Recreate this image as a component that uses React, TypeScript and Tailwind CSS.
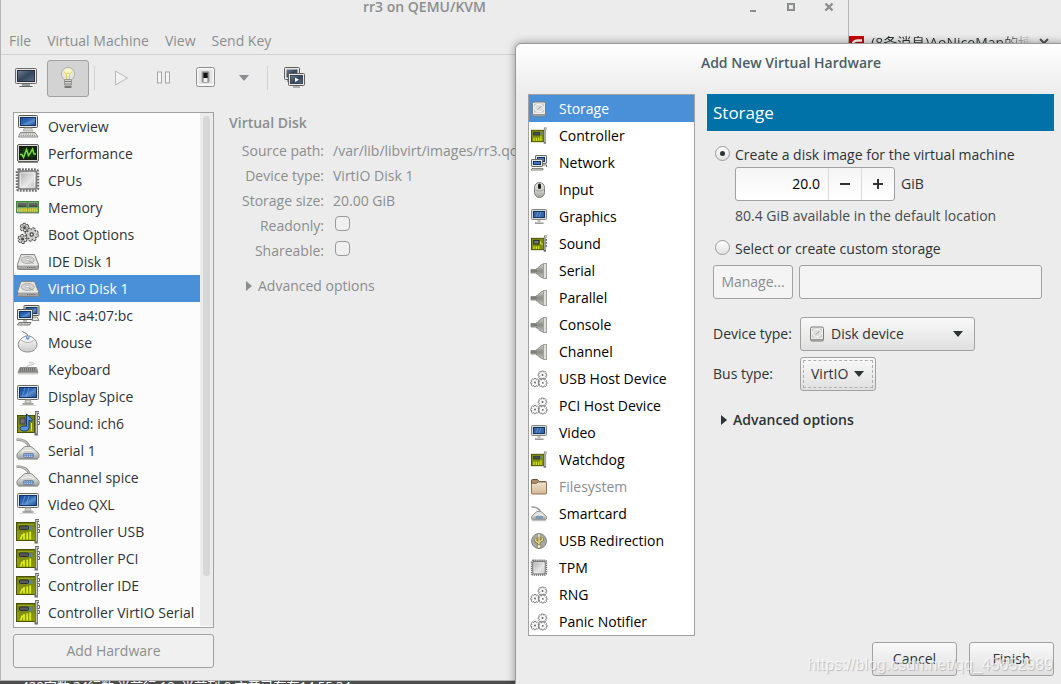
import { useState } from "react";
import type { ReactNode } from "react";
import clsx from "clsx";

// ─── Icon helpers ─────────────────────────────────────────────
const Svg = ({
  size,
  box = size,
  className,
  children,
}: {
  size: number;
  box?: number;
  className?: string;
  children: ReactNode;
}) => (
  <svg
    width={size}
    height={size}
    viewBox={`0 0 ${box} ${box}`}
    className={clsx("shrink-0 overflow-visible", className)}
    fill="none"
    aria-hidden="true"
  >
    {children}
  </svg>
);

// Gradients shared by all icons
const IconDefs = () => (
  <svg width="0" height="0" className="absolute" aria-hidden="true">
    <defs>
      <linearGradient id="blue" x1="0" y1="0" x2="1" y2="1">
        <stop offset="0" stopColor="#1b4c93" />
        <stop offset="0.45" stopColor="#2f69b6" />
        <stop offset="0.6" stopColor="#5d8fce" />
        <stop offset="1" stopColor="#1c4a8c" />
      </linearGradient>
      <linearGradient id="slate" x1="0" y1="0" x2="1" y2="1">
        <stop offset="0" stopColor="#6f8096" />
        <stop offset="0.5" stopColor="#36465c" />
        <stop offset="1" stopColor="#5a6b82" />
      </linearGradient>
      <linearGradient id="metal" x1="0" y1="0" x2="1" y2="1">
        <stop offset="0" stopColor="#a5a5a5" />
        <stop offset="0.6" stopColor="#e8e8e8" />
        <stop offset="1" stopColor="#b5b5b5" />
      </linearGradient>
      <linearGradient id="light" x1="0" y1="0" x2="0" y2="1">
        <stop offset="0" stopColor="#ffffff" />
        <stop offset="1" stopColor="#c9c9c9" />
      </linearGradient>
      <linearGradient id="body" x1="0" y1="0" x2="0" y2="1">
        <stop offset="0" stopColor="#e6e7e4" />
        <stop offset="0.6" stopColor="#cbccc8" />
        <stop offset="1" stopColor="#9fa19c" />
      </linearGradient>
      <linearGradient id="board" x1="0" y1="0" x2="0" y2="1">
        <stop offset="0" stopColor="#6f7d10" />
        <stop offset="1" stopColor="#8f9c12" />
      </linearGradient>
      <linearGradient id="plug" x1="0" y1="0" x2="0" y2="1">
        <stop offset="0" stopColor="#d0d2cb" />
        <stop offset="0.5" stopColor="#8b8d87" />
        <stop offset="1" stopColor="#c2c4bd" />
      </linearGradient>
      <linearGradient id="tan" x1="0" y1="0" x2="0" y2="1">
        <stop offset="0" stopColor="#f0e3d0" />
        <stop offset="1" stopColor="#d3b995" />
      </linearGradient>
    </defs>
  </svg>
);

// ─── 24px device icons ────────────────────────────────────────
const ComputerIcon = () => (
  <Svg size={24}>
    <rect x="2.5" y="0.5" width="19" height="12" rx="1" fill="#e4e4e0" stroke="#55574f" />
    <rect x="4.5" y="2.5" width="15" height="8" fill="url(#blue)" stroke="#12356b" />
    <path d="M8.500 13h7l1.500 3h-10z" fill="#d3d3cf" stroke="#a4a5a0" strokeWidth="0.800" />
    <path d="M4.500 17.500h14.500l3 4.500h-19.500z" fill="#eeeeec" stroke="#888a85" />
    <path d="M5 19h14M4.500 20.700h16" stroke="#8b8d88" strokeDasharray="1.500 0.700" />
  </Svg>
);

const PerformanceIcon = () => (
  <Svg size={24}>
    <rect x="1.500" y="2.500" width="21" height="17" rx="1.500" fill="#d9d9d5" stroke="#5b5d58" />
    <rect x="3.500" y="4.500" width="17" height="13" fill="#0e200c" stroke="#1a1a1a" />
    <path d="M4 8h16M4 11h16M4 14h16M8 5v12M12 5v12M16 5v12" stroke="#235a1c" strokeWidth="0.600" />
    <path d="M4 12.500h2l1.500 3 3-8 2 6 1.500-2 2.500-4.500 1.500 5h2" stroke="#7be03c" strokeWidth="1.500" />
    <path d="M2 20.500h20" stroke="#8b8d88" />
  </Svg>
);

const Chip = () => (
  <>
    <rect x="1" y="0.500" width="21" height="21" rx="2" stroke="#6f6f6f" strokeWidth="2.500" strokeDasharray="1.800 1.200" />
    <rect x="2.500" y="2" width="18" height="18" rx="2" fill="url(#metal)" stroke="#7b7b7b" strokeWidth="1.500" />
    <rect x="4.500" y="4" width="14" height="14" rx="1" stroke="#f2f2f2" strokeOpacity="0.700" />
  </>
);

const CpuIcon = () => (
  <Svg size={24}>
    <Chip />
  </Svg>
);

const MemoryIcon = () => (
  <Svg size={24}>
    <rect x="0.500" y="5.500" width="22" height="11" fill="#6ba564" stroke="#4d8449" />
    <rect x="2" y="7" width="8.500" height="4" fill="#4d504c" />
    <rect x="13" y="7" width="8.500" height="4" fill="#4d504c" />
    <path d="M2 8h8.500M13 8h8.500" stroke="#8a8a8a" strokeWidth="0.800" />
    <path d="M11.700 5v11" stroke="#3a8038" />
    <path d="M1 14h21" stroke="#d9d24a" strokeWidth="3.500" strokeDasharray="1.600 0.500" />
    <path d="M1 17.300h22" stroke="#b9b9b9" />
  </Svg>
);

const Gear = ({ x, y, r, dash }: { x: number; y: number; r: number; dash: string }) => (
  <g>
    <circle cx={x} cy={y} r={r} stroke="#4c4c4c" strokeWidth="3.6" strokeDasharray={dash} />
    <circle cx={x} cy={y} r={r} fill="#cfcfcd" stroke="#4c4c4c" strokeWidth="1.4" />
    <circle cx={x} cy={y} r={r} stroke="#e2e2df" strokeWidth="1.6" strokeDasharray={dash} />
    <circle cx={x} cy={y} r={r * 0.3} fill="#fff" stroke="#3c3c3c" strokeWidth="1.2" />
  </g>
);

const BootIcon = () => (
  <Svg size={24}>
    <Gear x={8.500} y={4.500} r={3} dash="2.100 1.040" />
    <Gear x={15.700} y={11.500} r={5.400} dash="2.400 1.840" />
    <Gear x={6.500} y={16} r={3.200} dash="2.100 1.250" />
  </Svg>
);

const DiskIcon = () => (
  <Svg size={24}>
    <path d="M5 4.500h13.500l4 10v4q0 1-1 1h-19q-1 0-1-1v-4z" fill="#dcdcda" stroke="#82827f" />
    <path d="M5.500 5.500h12.500l3.300 9h-19z" fill="#e6e6e4" />
    <ellipse cx="11.700" cy="10" rx="6.500" ry="3.500" fill="#d3d3d1" stroke="#adadab" />
    <ellipse cx="11.500" cy="9.500" rx="2" ry="1" fill="#f8f8f8" stroke="#a5a5a5" strokeWidth="0.600" />
    <path d="M13 11l4.500 2.500" stroke="#9b9b9b" />
    <path d="M2 15h20v4h-20z" fill="#a3a3a1" />
    <path d="M11 17.500h9" stroke="#6b6b69" strokeDasharray="1 0.800" />
    <path d="M2.500 15h19" stroke="#f4f4f4" />
  </Svg>
);

const NicIcon = () => (
  <Svg size={24}>
    <rect x="8" y="1.500" width="15" height="10" rx="0.500" fill="#e4e4e0" stroke="#55574f" />
    <rect x="10" y="3.500" width="11" height="6" fill="url(#blue)" stroke="#12356b" />
    <path d="M17 13h4l2 3.500h-7z" fill="#e4e4e0" stroke="#888a85" />
    <rect x="1.500" y="5.500" width="15" height="10" rx="0.500" fill="#e4e4e0" stroke="#55574f" />
    <rect x="3.500" y="7.500" width="11" height="6" fill="url(#blue)" stroke="#12356b" />
    <path d="M7 16h4v2H7z" fill="#babdb6" />
    <path d="M3 18.500h12l-1.500 2.500h-12z" fill="#eeeeec" stroke="#777973" />
    <path d="M3.500 19.800h10" stroke="#888a85" strokeDasharray="1 0.500" />
  </Svg>
);

const MouseIcon = () => (
  <Svg size={24}>
    <path d="M6.500 0c0 2 5.500 1.500 5 5" stroke="#777" />
    <path d="M11.700 5c5 0 9.300 4.500 9.300 8.500 0 4.500-4 7.500-9.300 7.500s-9.500-3-9.500-7.500c0-4 4.500-8.500 9.500-8.500z" fill="url(#light)" stroke="#8c8c8c" />
    <path d="M5 9c4.500 3.500 9 3.500 13.500 0" stroke="#b9b9b9" />
    <path d="M9.500 3.500l2 3.500 2.500-3-1 4.500h-2.500z" fill="#5f93d8" />
  </Svg>
);

const KeyboardIcon = () => (
  <Svg size={24}>
    <path d="M11 9c0-3 7-1 7-3.500 0-1.200-3-0.500-5-1" stroke="#bcbcbc" />
    <path d="M4 9.500h16.500l1.500 5.500h-20z" fill="#b4b4b2" stroke="#8c8c8a" />
    <path d="M4 11h16M3.500 13h17" stroke="#555" strokeWidth="1.300" strokeDasharray="1.300 0.700" />
    <path d="M2 16h20" stroke="#d1d1d1" />
  </Svg>
);

const DisplayIcon = () => (
  <Svg size={24}>
    <rect x="1.500" y="0.500" width="21" height="14" rx="1" fill="#e4e4e0" stroke="#6c6e68" />
    <rect x="3.500" y="2.500" width="17" height="10" fill="url(#blue)" stroke="#12356b" />
    <path d="M6 12l3-9M10 12l3-9" stroke="#7fa8de" strokeOpacity="0.600" />
    <path d="M9.500 15h5l0.500 3h-6z" fill="#d3d3cf" stroke="#a4a5a0" />
    <path d="M6.500 19h11" stroke="#8e908a" strokeWidth="1.500" />
    <path d="M4 20.500h16" stroke="#dedede" />
  </Svg>
);

const Bracket = () => (
  <>
    <path d="M23 0.500h-2.500v21.500h-2" stroke="#6b6d68" strokeWidth="2.800" />
    <path d="M22.800 0.500h-2.300v21" stroke="#c3c5bf" strokeWidth="1.200" />
    <path d="M21.500 4.500h2v3h-2M21.500 9.500h2v3h-2" stroke="#6b6d68" />
  </>
);

const CardIcon = () => (
  <Svg size={24}>
    <rect x="0.500" y="2.500" width="19" height="18" fill="url(#board)" stroke="#4a5208" />
    <path d="M2 4.500h15.500M2 11v6" stroke="#a3b01b" strokeWidth="0.800" />
    <rect x="3.500" y="6" width="9" height="3.500" rx="1" fill="#565a5c" stroke="#2b2f31" />
    <path d="M13 6.800h3.500M13 9h3.500" stroke="#4f86c9" strokeWidth="1.300" />
    <path d="M4.500 19.500l2-5M8 19.500v-6.500M11.200 19.500v-7M14.200 19.500v-8" stroke="#e2f312" strokeWidth="1.700" />
    <Bracket />
  </Svg>
);

const SoundIcon = () => (
  <Svg size={24}>
    <rect x="1.500" y="3.500" width="17" height="17" fill="url(#board)" stroke="#4a5208" />
    <rect x="4" y="6" width="5" height="6" fill="#6d6f6b" stroke="#3c4246" />
    <path d="M10.500 2l6 5.500-1.200 2-2.300-1.500v7.500c0 2.500-2 3.500-4.500 3.500-2.500 0-4.500-1-4.500-2.700s3-2.800 6.500-2z" fill="#5b93e2" stroke="#123a78" />
    <path d="M15.500 11v8" stroke="#e2f312" />
    <Bracket />
  </Svg>
);

const ModemIcon = () => (
  <Svg size={24}>
    <path d="M0.500 0.500c7 0 12 2 13 9" stroke="#8e908b" strokeWidth="2.600" />
    <path d="M0.500 0.500c7 0 12 2 13 9" stroke="#c3c4c0" strokeWidth="1.100" />
    <path d="M9 7.500h6q4.500 3 8 7.500v3q0 1.500-2 1.500h-18q-2 0-2-1.500v-3q3.500-4.500 8-7.500z" fill="url(#body)" stroke="#8e908b" />
    <path d="M5.500 13q6-4 13 0" stroke="#f6f6f4" />
    <rect x="7.500" y="14.500" width="10" height="4" rx="1" fill="#5f8fd0" stroke="#7d8492" />
    <path d="M8.500 15.800h8M8.500 17.500h8" stroke="#dce8f8" strokeWidth="0.700" strokeDasharray="1.200 1" />
    <path d="M2 20.500h20" stroke="#b6b6b4" />
  </Svg>
);

// ─── 16px device icons ────────────────────────────────────────
const Disk16 = () => (
  <Svg size={16}>
    <rect x="1.500" y="1" width="13" height="14" rx="1.500" fill="#ededeb" stroke="#7b7b79" />
    <rect x="3" y="2.500" width="10" height="9" rx="1" fill="#c9c9c7" />
    <ellipse cx="8" cy="7" rx="4.300" ry="3.700" fill="#dedede" stroke="#f6f6f6" />
    <path d="M7 8.500c1-2 3-2.500 3.500-3" stroke="#a0a09e" />
    <path d="M2 13.800h12" stroke="#8f8f8d" strokeWidth="1.400" />
  </Svg>
);

const Card16 = () => (
  <Svg size={16} box={24}>
    <rect x="0.700" y="3.500" width="18.500" height="17" fill="#808e14" stroke="#4b5308" strokeWidth="1.500" />
    <rect x="4" y="6.500" width="9" height="4" fill="#4b5356" stroke="#2c3337" strokeWidth="1.200" />
    <path d="M13.500 8h3.500" stroke="#4f86c9" strokeWidth="2" />
    <path d="M4.500 19.500v-5M8 19.500v-5M11.500 19.500v-5M15 19.500v-7" stroke="#d3e312" strokeWidth="1.900" />
    <path d="M23.500 1h-2.500v21h-2" stroke="#7d7f79" strokeWidth="3.200" />
    <path d="M23.500 1h-2.500v20" stroke="#d5d7d1" strokeWidth="1.400" />
  </Svg>
);

const Sound16 = () => (
  <Svg size={16} box={24}>
    <rect x="0.700" y="3.500" width="18.500" height="17" fill="#808e14" stroke="#4b5308" strokeWidth="1.500" />
    <rect x="4" y="6.500" width="8" height="5.500" fill="#777" stroke="#22292c" strokeWidth="1.500" />
    <path d="M4.500 19.500v-4M8 19.500v-4M11.500 19.500v-4" stroke="#d3e312" strokeWidth="1.900" />
    <path d="M14.500 8v4h3" stroke="#e2e94a" strokeWidth="1.500" />
    <path d="M23.500 1h-2.500v21h-2" stroke="#6b6d68" strokeWidth="3.200" />
    <path d="M23.500 1h-2.500v20" stroke="#e0e1dc" strokeWidth="1.400" />
    <path d="M22 6h2M22 10.500h2M22 15h2" stroke="#555753" strokeWidth="2" />
  </Svg>
);

const Network16 = () => (
  <Svg size={16}>
    <rect x="4.500" y="0.500" width="11" height="8" rx="0.500" fill="#e4e4e0" stroke="#6c6e68" />
    <rect x="6.500" y="2.500" width="7" height="4" fill="#3f74b8" stroke="#12356b" />
    <path d="M12 10h3.500v2" stroke="#6c6e68" />
    <rect x="0.500" y="4.500" width="11" height="7" rx="0.500" fill="#e4e4e0" stroke="#6c6e68" />
    <rect x="2.500" y="6.500" width="7" height="3" fill="#3f74b8" stroke="#12356b" />
    <path d="M1 13.500h11v1.500h-12z" fill="#e4e4e0" stroke="#6c6e68" strokeWidth="0.800" />
  </Svg>
);

const Input16 = () => (
  <Svg size={16}>
    <rect x="3.500" y="0.500" width="10" height="15" rx="5" fill="url(#body)" stroke="#7c7c7a" />
    <path d="M4.500 7.500c1 2 7 2 8 0" stroke="#9d9d9b" />
    <rect x="7" y="1.500" width="3" height="5.500" rx="1.500" fill="#1d1d1d" />
  </Svg>
);

const Display16 = () => (
  <Svg size={16}>
    <rect x="0.500" y="0.500" width="15" height="10" rx="1" fill="#d8d8d2" stroke="#85877f" />
    <rect x="2.500" y="2.500" width="11" height="6" fill="#3567ab" stroke="#12356b" />
    <path d="M5 8l2-5M8 8l2-5" stroke="#7fa8de" strokeOpacity="0.700" />
    <path d="M6.500 11h3v2h-3z" fill="#babdb6" />
    <path d="M4 14h8.500" stroke="#7d7f79" strokeWidth="1.600" />
    <path d="M4.500 13.600h7.500" stroke="#e6e6e2" strokeWidth="0.600" />
  </Svg>
);

const Plug16 = () => (
  <Svg size={16}>
    <path d="M12.500 1c-3 0.500-4.500 2.500-6 4.500h-1v1H0v3.500h5.500v1h1c1.500 2 3 3.500 6 4z" fill="url(#plug)" stroke="#8b8d87" />
    <path d="M0 8h6" stroke="#6b6d67" />
    <rect x="12.500" y="0.500" width="3" height="15" fill="#dfe0da" stroke="#a0a29b" />
  </Svg>
);

const MiniGear = ({ x, y }: { x: number; y: number }) => (
  <g transform={`translate(${x} ${y})`}>
    <path
      d="M-1-4h2l0.300 1.300 1.300-0.800 1.200 1.200-0.800 1.300 1.300 0.300v1.600l-1.300 0.300 0.800 1.300-1.200 1.200-1.300-0.800-0.300 1.300h-2l-0.300-1.300-1.300 0.800-1.200-1.200 0.800-1.300-1.300-0.300v-1.600l1.300-0.300-0.800-1.300 1.200-1.200 1.300 0.800z"
      fill="#fafafa"
      stroke="#707070"
      strokeWidth="0.800"
    />
    <circle r="0.900" fill="#555" />
  </g>
);

const Gears16 = () => (
  <Svg size={16}>
    <MiniGear x={11.500} y={4} />
    <MiniGear x={4} y={11.500} />
    <MiniGear x={11.800} y={11.800} />
  </Svg>
);

const Folder16 = () => (
  <Svg size={16}>
    <path d="M0.500 13.500v-12q0-1 1-1h5l1.500 2h7v11z" fill="#a98d68" stroke="#6d5433" />
    <path d="M0.500 5.300q0-0.800 1-0.800h4l1.500-1.500h7.500q1 0 1 0.800v10.200q0 1-1 1h-13q-1 0-1-1z" fill="url(#tan)" stroke="#8d7351" />
  </Svg>
);

const Modem16 = () => (
  <Svg size={16}>
    <path d="M0.500 1c5 0 8 1 9 5" stroke="#9b9d98" strokeWidth="1.600" />
    <path d="M6 5.500h4q3 2 5.500 5v2q0 1-1 1h-13q-1 0-1-1v-2q2.500-3 5.500-5z" fill="url(#body)" stroke="#9b9d98" />
    <path d="M3.500 9.500q4.500-3 9 0" stroke="#f6f6f4" />
    <rect x="5" y="10.500" width="6.500" height="2" fill="#6b9ee0" stroke="#7d8794" strokeWidth="0.600" />
    <path d="M1 14.700h14" stroke="#b6b6b4" />
  </Svg>
);

const Usb16 = () => (
  <Svg size={16}>
    <circle cx="8" cy="8" r="7.500" fill="#a6a6a4" stroke="#8a8a88" />
    <path d="M8 2.500v10M4.800 5.500v2.500l3.200 2.500M11.200 4.500v2.500l-3.200 2" stroke="#6d6524" strokeWidth="2.600" />
    <path d="M8 2.500v10M4.800 5.500v2.500l3.200 2.500M11.200 4.500v2.500l-3.200 2" stroke="#e9de8c" strokeWidth="1.400" />
    <circle cx="8" cy="13.500" r="1.800" fill="#f8f5d2" stroke="#6d6524" strokeWidth="0.600" />
    <path d="M6.500 3.500l1.500-2.500 1.500 2.500z" fill="#f4efbf" />
  </Svg>
);

const Chip16 = () => (
  <Svg size={16} box={23}>
    <Chip />
  </Svg>
);

// ─── Data ─────────────────────────────────────────────────────
const vmDevices = [
  { name: "Overview", Icon: ComputerIcon },
  { name: "Performance", Icon: PerformanceIcon },
  { name: "CPUs", Icon: CpuIcon },
  { name: "Memory", Icon: MemoryIcon },
  { name: "Boot Options", Icon: BootIcon },
  { name: "IDE Disk 1", Icon: DiskIcon },
  { name: "VirtIO Disk 1", Icon: DiskIcon },
  { name: "NIC :a4:07:bc", Icon: NicIcon },
  { name: "Mouse", Icon: MouseIcon },
  { name: "Keyboard", Icon: KeyboardIcon },
  { name: "Display Spice", Icon: DisplayIcon },
  { name: "Sound: ich6", Icon: SoundIcon },
  { name: "Serial 1", Icon: ModemIcon },
  { name: "Channel spice", Icon: ModemIcon },
  { name: "Video QXL", Icon: DisplayIcon },
  { name: "Controller USB", Icon: CardIcon },
  { name: "Controller PCI", Icon: CardIcon },
  { name: "Controller IDE", Icon: CardIcon },
  { name: "Controller VirtIO Serial", Icon: CardIcon },
];

const hardwareTypes = [
  { name: "Storage", Icon: Disk16 },
  { name: "Controller", Icon: Card16 },
  { name: "Network", Icon: Network16 },
  { name: "Input", Icon: Input16 },
  { name: "Graphics", Icon: Display16 },
  { name: "Sound", Icon: Sound16 },
  { name: "Serial", Icon: Plug16 },
  { name: "Parallel", Icon: Plug16 },
  { name: "Console", Icon: Plug16 },
  { name: "Channel", Icon: Plug16 },
  { name: "USB Host Device", Icon: Gears16 },
  { name: "PCI Host Device", Icon: Gears16 },
  { name: "Video", Icon: Display16 },
  { name: "Watchdog", Icon: Card16 },
  { name: "Filesystem", Icon: Folder16, disabled: true },
  { name: "Smartcard", Icon: Modem16 },
  { name: "USB Redirection", Icon: Usb16 },
  { name: "TPM", Icon: Chip16 },
  { name: "RNG", Icon: Gears16 },
  { name: "Panic Notifier", Icon: Gears16 },
];

const diskInfo = [
  { label: "Source path:", value: "/var/lib/libvirt/images/rr3.qcow2" },
  { label: "Device type:", value: "VirtIO Disk 1" },
  { label: "Storage size:", value: "20.00 GiB" },
];

// ─── Small pieces ─────────────────────────────────────────────
const CaretDown = ({ className }: { className?: string }) => (
  <svg width="10" height="6" viewBox="0 0 10 6" className={className} aria-hidden="true">
    <path d="M0 0h10L5 6z" fill="currentColor" />
  </svg>
);

const CaretRight = () => (
  <svg width="6" height="10" viewBox="0 0 6 10" aria-hidden="true">
    <path d="M0 0l6 5-6 5z" fill="currentColor" />
  </svg>
);

const ToolButton = ({
  label,
  active,
  narrow,
  children,
}: {
  label: string;
  active?: boolean;
  narrow?: boolean;
  children: ReactNode;
}) => (
  <button
    aria-label={label}
    className={clsx(
      "flex h-[37px] items-center justify-center rounded-[3px] border",
      narrow ? "w-9" : "w-[42px]",
      active ? "border-[#a1a1a1] bg-[#d3d3d3]" : "border-transparent"
    )}
  >
    {children}
  </button>
);

const Separator = () => <div className="mx-[5px] h-6 w-px bg-[#d2d2d2]" />;

const Radio = ({
  id,
  label,
  checked,
  onChange,
}: {
  id: string;
  label: string;
  checked: boolean;
  onChange: () => void;
}) => (
  <div className="flex h-6 items-center pl-0.5">
    <input
      type="radio"
      id={id}
      name="storage-source"
      checked={checked}
      onChange={onChange}
      className="mb-1 grid size-[15px] appearance-none place-content-center rounded-full border border-[#9a9a9a] bg-linear-to-b from-white to-[#e2e2e2] checked:before:size-[5px] checked:before:rounded-full checked:before:bg-[#2e3436]"
    />
    <label htmlFor={id} className="pl-[5px]">
      {label}
    </label>
  </div>
);

// ─── Virtual machine window ───────────────────────────────────
const VmWindow = () => {
  const [selected, setSelected] = useState("VirtIO Disk 1");

  return (
    <section className="absolute top-0 left-0 w-[849px] border-r border-b border-l border-[#b4b4b4] bg-[#ececec] text-[#8b8e8f]">
      <header className="relative flex h-7 justify-center">
        <h1 className="leading-[14px] font-semibold">rr3 on QEMU/KVM</h1>
        <div className="absolute top-0 right-[11px] flex h-3.5 items-center gap-[22px]">
          <button aria-label="Minimize">
            <svg width="16" height="10" viewBox="0 0 16 10">
              <path d="M5 8h6v2H5z" fill="#8b8e8f" />
            </svg>
          </button>
          <button aria-label="Maximize">
            <svg width="16" height="10" viewBox="0 0 16 10" fill="none">
              <path d="M5 2h6v6H5z" stroke="#8b8e8f" strokeWidth="2" />
            </svg>
          </button>
          <button aria-label="Close">
            <svg width="16" height="10" viewBox="0 0 16 10">
              <path d="M4.500 1.500l7 7m0-7l-7 7" stroke="#8b8e8f" strokeWidth="2.400" />
            </svg>
          </button>
        </div>
      </header>

      <nav className="flex h-[27px] items-center gap-4 border-b border-[#d2d2d2] px-2">
        <button>File</button>
        <button>Virtual Machine</button>
        <button>View</button>
        <button>Send Key</button>
      </nav>

      {/* Toolbar */}
      <div className="flex h-[46px] items-center px-1">
        <ToolButton label="Console">
          <Svg size={24}>
            <rect x="1.500" y="2.500" width="21" height="15" rx="1" fill="#e6e6e4" stroke="#6a6a68" />
            <rect x="3.500" y="4.500" width="17" height="11" fill="url(#slate)" stroke="#252f3d" />
            <path d="M8 19h8" stroke="#999" strokeWidth="2" />
            <path d="M5.500 20.500h13" stroke="#666" />
          </Svg>
        </ToolButton>
        <ToolButton label="Details" active>
          <Svg size={24}>
            <circle cx="12" cy="8" r="6.700" fill="#e3e3dc" stroke="#b3b3ae" />
            <circle cx="12" cy="6.500" r="4" fill="#fbf6c0" />
            <path d="M8 5.500l2 3 2-1.500 2 1.500 2-3M10.500 9v5M13.500 9v5" stroke="#dccb63" />
            <path d="M8.500 13.500h7v4.500q0 2-2 2h-3q-2 0-2-2z" fill="#d3d3d1" stroke="#9c9c9a" />
            <path d="M8.500 15.500h7M8.500 18h7" stroke="#7f7f7d" />
            <path d="M8.500 21h7" stroke="#5f5f5d" strokeWidth="1.500" />
          </Svg>
        </ToolButton>
        <Separator />
        <ToolButton label="Run">
          <Svg size={24}>
            <path d="M6.500 5v14l12-7z" fill="#f1f1f1" stroke="#b9b9b9" />
          </Svg>
        </ToolButton>
        <ToolButton label="Pause">
          <Svg size={24}>
            <rect x="6.500" y="6" width="4" height="11" fill="#f6f6f6" stroke="#a5a5a5" />
            <rect x="14.500" y="6" width="4" height="11" fill="#f6f6f6" stroke="#a5a5a5" />
          </Svg>
        </ToolButton>
        <ToolButton label="Shut Down">
          <Svg size={24}>
            <rect x="3.500" y="1.500" width="18" height="19" rx="2" fill="#f8f8f8" stroke="#8f8f8f" />
            <rect x="5.500" y="3.500" width="14" height="14.500" rx="1" fill="#e3e3e3" />
            <rect x="9" y="5.500" width="7" height="11" rx="1" fill="#777" stroke="#aaa" />
            <rect x="10.500" y="7" width="4" height="5" fill="#111" />
            <rect x="10.500" y="12" width="4" height="4" fill="#eee" />
          </Svg>
        </ToolButton>
        <ToolButton label="Shut down options" narrow>
          <CaretDown />
        </ToolButton>
        <Separator />
        <ToolButton label="Fullscreen">
          <Svg size={24}>
            <rect x="2.500" y="1.500" width="15" height="12" rx="1" fill="#e6e6e4" stroke="#5f5f5d" />
            <rect x="4.500" y="3.500" width="11" height="8" fill="url(#slate)" />
            <path d="M5 15h3" stroke="#999" strokeWidth="2" />
            <rect x="6.500" y="7.500" width="16" height="12" rx="1" fill="#e6e6e4" stroke="#5f5f5d" />
            <rect x="8.500" y="9.500" width="12" height="8" fill="url(#slate)" stroke="#39485d" />
            <path d="M13 11.500v4.500l4-2.200z" fill="#fff" />
            <path d="M11 21h7" stroke="#999" strokeWidth="1.500" />
          </Svg>
        </ToolButton>
      </div>

      <div className="flex gap-[15px] px-3 pt-[11px] pb-3">
        <div className="flex w-[201px] shrink-0 flex-col gap-1.5">
          <div className="flex border border-[#a1a1a1] bg-[#fcfcfc] pb-px">
            <ul className="min-w-0 flex-1 text-[#2e3436]">
              {vmDevices.map(({ name, Icon }) => (
                <li key={name}>
                  <button
                    onClick={() => setSelected(name)}
                    className={clsx(
                      "flex h-[27px] w-full items-center gap-2 pl-0.5 whitespace-nowrap",
                      name === selected && "bg-[#4a90d9] text-white"
                    )}
                  >
                    <Icon />
                    {name}
                  </button>
                </li>
              ))}
            </ul>
            <div className="w-[13px] bg-[#ececec] py-[3px] pl-[3px]">
              <div className="h-[460px] w-[7px] rounded-full bg-[#d6d8d7]" />
            </div>
          </div>
          <button className="h-[34px] rounded-[3px] border border-[#a1a1a1] bg-[#f0f0f0]">
            Add Hardware
          </button>
        </div>

        <div className="min-w-0 flex-1">
          <h2 className="h-[26px] leading-[22px] font-semibold">Virtual Disk</h2>
          <div className="grid grid-cols-[95px_1fr] gap-x-[9px] leading-[25px]">
            {diskInfo.map((row) => (
              <div key={row.label} className="contents">
                <span className="text-right">{row.label}</span>
                <span>{row.value}</span>
              </div>
            ))}
            {["Readonly", "Shareable"].map((name) => (
              <div key={name} className="contents">
                <label htmlFor={name} className="text-right">
                  {name}:
                </label>
                <div className="flex pt-[3px] pl-0.5">
                  <input
                    id={name}
                    type="checkbox"
                    className="size-[15px] appearance-none rounded-[4px] border border-[#9a9a9a] bg-[#f0f0f0]"
                  />
                </div>
              </div>
            ))}
          </div>
          <button className="mt-[11px] flex h-6 items-center gap-1.5 pl-[17px]">
            <CaretRight />
            Advanced options
          </button>
        </div>
      </div>
    </section>
  );
};

// ─── Add hardware dialog ──────────────────────────────────────
const AddHardwareDialog = () => {
  const [selected, setSelected] = useState("Storage");
  const [source, setSource] = useState("create");
  const [size, setSize] = useState(20);

  return (
    <section
      role="dialog"
      aria-labelledby="dialog-title"
      className="absolute top-[43px] -right-1.5 left-[515px] rounded-t-md border border-[#9a9a9a] bg-[#ececec] text-[#2e3436] shadow-[0_0_8px_rgba(0,0,0,0.4)]"
    >
      <header className="rounded-t-md bg-linear-to-b from-white to-[#ececec] pt-[9px] pb-[21px]">
        <h2 id="dialog-title" className="text-center font-semibold text-[#4b5e66]">
          Add New Virtual Hardware
        </h2>
      </header>

      <div className="flex gap-3 px-3">
        <ul className="w-[167px] shrink-0 border border-[#a1a1a1] bg-white text-black">
          {hardwareTypes.map(({ name, Icon, disabled }) => (
            <li key={name}>
              <button
                disabled={disabled}
                onClick={() => setSelected(name)}
                className={clsx(
                  "flex h-[27px] w-full items-center gap-3 pl-0.5 whitespace-nowrap",
                  name === selected && "bg-[#4a90d9] text-white",
                  disabled && "text-[#8b8e8f]"
                )}
              >
                <Icon />
                {name}
              </button>
            </li>
          ))}
        </ul>

        <div className="min-w-0 flex-1">
          <h3 className="bg-[#0072a8] pl-1.5 text-[17px] leading-[37px] text-white">Storage</h3>

          <div className="px-1.5 pt-3">
            <Radio
              id="create"
              label="Create a disk image for the virtual machine"
              checked={source === "create"}
              onChange={() => setSource("create")}
            />
            <div className="flex items-center gap-1.5 pl-[22px]">
              <div className="flex h-[34px] w-40 rounded-[3px] border border-[#a1a1a1] bg-linear-to-b from-[#f5f5f5] to-white">
                <input
                  aria-label="Disk size in GiB"
                  value={size.toFixed(1)}
                  onChange={(e) => setSize(Number(e.target.value) || 0)}
                  className="min-w-0 flex-1 pr-2 text-right text-black"
                />
                <button
                  aria-label="Decrease size"
                  onClick={() => setSize(size - 1)}
                  className="flex w-[33px] items-center justify-center border-l border-[#dcdcdc]"
                >
                  <svg width="10" height="10" viewBox="0 0 10 10">
                    <path d="M0 4h10v2H0z" fill="#2e3436" />
                  </svg>
                </button>
                <button
                  aria-label="Increase size"
                  onClick={() => setSize(size + 1)}
                  className="flex w-[33px] items-center justify-center border-l border-[#dcdcdc]"
                >
                  <svg width="10" height="10" viewBox="0 0 10 10">
                    <path d="M0 4h4V0h2v4h4v2H6v4H4V6H0z" fill="#2e3436" />
                  </svg>
                </button>
              </div>
              <span>GiB</span>
            </div>
            <p className="pl-[22px] leading-[30px] text-[#484c4e]">
              80.4 GiB available in the default location
            </p>

            <div className="mt-1.5">
              <Radio
                id="custom"
                label="Select or create custom storage"
                checked={source === "custom"}
                onChange={() => setSource("custom")}
              />
            </div>
            <div className="mt-1 flex gap-1.5 pr-1.5">
              <button
                disabled
                className="h-[34px] w-20 rounded-[3px] border border-[#a1a1a1] bg-[#f4f4f4] text-[#8b8e8f]"
              >
                Manage...
              </button>
              <input
                disabled
                aria-label="Storage path"
                className="h-[34px] min-w-0 flex-1 rounded-[3px] border border-[#a1a1a1] bg-[#f4f4f4] px-2"
              />
            </div>

            <div className="mt-[18px] grid grid-cols-[87px_1fr] items-center gap-y-1.5">
              <label htmlFor="device-type">Device type:</label>
              <div className="relative w-[175px]">
                <select
                  id="device-type"
                  className="h-[34px] w-full appearance-none rounded-[3px] border border-[#a1a1a1] bg-linear-to-b from-[#f9f9f9] to-[#e0e0e0] pl-[30px]"
                >
                  <option>Disk device</option>
                </select>
                <div className="pointer-events-none absolute inset-y-0 left-[9px] flex items-center">
                  <Disk16 />
                </div>
                <CaretDown className="pointer-events-none absolute top-3.5 right-3" />
              </div>
              <label htmlFor="bus-type">Bus type:</label>
              <div className="relative w-[76px]">
                <select
                  id="bus-type"
                  className="h-[34px] w-full appearance-none rounded-[3px] border border-[#a1a1a1] bg-linear-to-b from-[#f9f9f9] to-[#e0e0e0] pl-2.5"
                >
                  <option>VirtIO</option>
                </select>
                <div className="pointer-events-none absolute inset-[3px] border border-dashed border-[#b0b0b0]" />
                <CaretDown className="pointer-events-none absolute top-3.5 right-3" />
              </div>
            </div>

            <button className="mt-[17px] flex h-6 items-center gap-1.5 pl-2 font-semibold">
              <CaretRight />
              Advanced options
            </button>
          </div>
        </div>
      </div>

      <footer className="flex justify-end gap-3 px-3 pt-1.5 pb-3">
        {["Cancel", "Finish"].map((name) => (
          <button
            key={name}
            className="h-[34px] w-[85px] rounded-[3px] border border-[#a1a1a1] bg-linear-to-b from-[#f9f9f9] to-[#e0e0e0]"
          >
            {name}
          </button>
        ))}
      </footer>
    </section>
  );
};

// ─── Desktop ──────────────────────────────────────────────────
export default function App() {
  return (
    <main className="relative flex h-screen flex-col justify-between overflow-hidden bg-[#ececec] font-['Open_Sans','Noto_Sans_CJK_SC',sans-serif] text-[14px] leading-5">
      <IconDefs />

      {/* Browser tab behind the windows */}
      <div className="flex items-center gap-[7px] self-end pt-[33px] pr-3 text-[#2e3436]">
        <svg width="15" height="15" viewBox="0 0 15 15" fill="none" aria-hidden="true">
          <path d="M0 0h15v15H0z" fill="#c80000" />
          <path d="M13 4.500H8.500C5 4.500 3.500 7 3.500 9.500" stroke="#fff" strokeWidth="2.500" />
        </svg>
        <span className="w-[161px] overflow-hidden bg-linear-to-r from-[#2e3436] from-80% to-[#ececec] bg-clip-text whitespace-nowrap text-transparent">
          (8条消息)AoNiceMan的博客
        </span>
        <svg width="10" height="10" viewBox="0 0 10 10" aria-hidden="true">
          <path d="M1 1l8 8m0-8l-8 8" stroke="#555" strokeWidth="2" />
        </svg>
      </div>

      {/* Editor status bar */}
      <div className="h-[3px] overflow-hidden bg-[#4d4d4d] text-[13px] leading-[10px] whitespace-pre text-white">
        wn 420字数 24行数 当前行 10, 当前列 0 文章已存在14:55:34
      </div>

      <VmWindow />
      <AddHardwareDialog />

      <div className="pointer-events-none absolute right-2 bottom-[7px] font-['Liberation_Sans',sans-serif] text-base leading-6 text-white/70 [text-shadow:1px_1px_1px_rgba(120,120,120,0.4)]">
        https://blog.csdn.net/qq_45652989
      </div>
    </main>
  );
}
